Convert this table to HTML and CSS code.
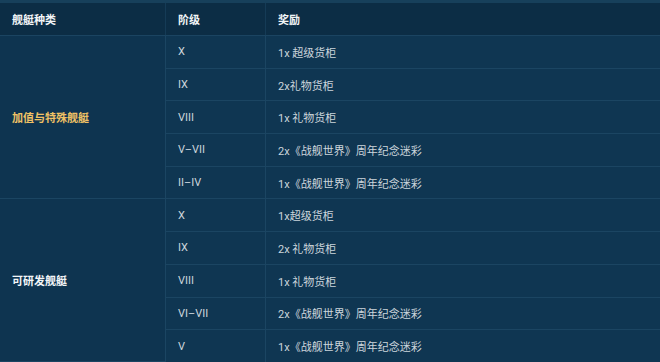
FILE: index.html
```html
<!DOCTYPE html>
<html lang="zh">
<head>
<meta charset="utf-8">
<link rel="stylesheet" href="styles.css">
</head>
<body>
<div class="wrap">
<table class="rewards">
  <thead>
    <tr><th class="c1">舰艇种类</th><th class="c2">阶级</th><th class="c3">奖励</th></tr>
  </thead>
  <tbody>
    <tr><td class="c1 group gold" rowspan="5">加值与特殊舰艇</td><td>X</td><td>1x 超级货柜</td></tr>
    <tr><td>IX</td><td>2x礼物货柜</td></tr>
    <tr><td>VIII</td><td>1x 礼物货柜</td></tr>
    <tr><td>V–VII</td><td>2x《战舰世界》周年纪念迷彩</td></tr>
    <tr><td>II–IV</td><td>1x《战舰世界》周年纪念迷彩</td></tr>
    <tr><td class="c1 group white" rowspan="5">可研发舰艇</td><td>X</td><td>1x超级货柜</td></tr>
    <tr><td>IX</td><td>2x 礼物货柜</td></tr>
    <tr><td>VIII</td><td>1x 礼物货柜</td></tr>
    <tr><td>VI–VII</td><td>2x《战舰世界》周年纪念迷彩</td></tr>
    <tr><td>V</td><td>1x《战舰世界》周年纪念迷彩</td></tr>
  </tbody>
</table>
</div>
</body>
</html>
```
FILE: styles.css
```css
html, body {
  margin: 0;
  padding: 0;
  background: #0f3550;
}
.wrap {
  border-top: 3px solid #17405b;
}
.rewards {
  width: 660px;
  border-collapse: collapse;
  table-layout: fixed;
  font-family: Roboto, "Noto Sans CJK SC", "Noto Sans", sans-serif;
  font-size: 11px;
  color: #ccd5dc;
}
.rewards th {
  background: #0c2d45;
  color: #f2f5f7;
  font-weight: 700;
  text-align: left;
  height: 32px;
  padding: 0 12px;
  border-bottom: 1px solid #1b4461;
  border-left: 1px solid #153b56;
}
.rewards td {
  height: 31.7px;
  padding: 0 12px;
  border-bottom: 1px solid #1b4562;
  border-left: 1px solid #1b4562;
  background: #0f3652;
}
.rewards th.c1, .rewards td.c1 { border-left: none; }
.c1 { width: 141px; }
.c2 { width: 75px; }
.group {
  font-weight: 700;
  vertical-align: middle;
  background: #0e3450 !important;
}
.gold { color: #f0c265; }
.white { color: #f3f6f8; }
.rewards tbody tr:last-child td { border-bottom: none; }
```
